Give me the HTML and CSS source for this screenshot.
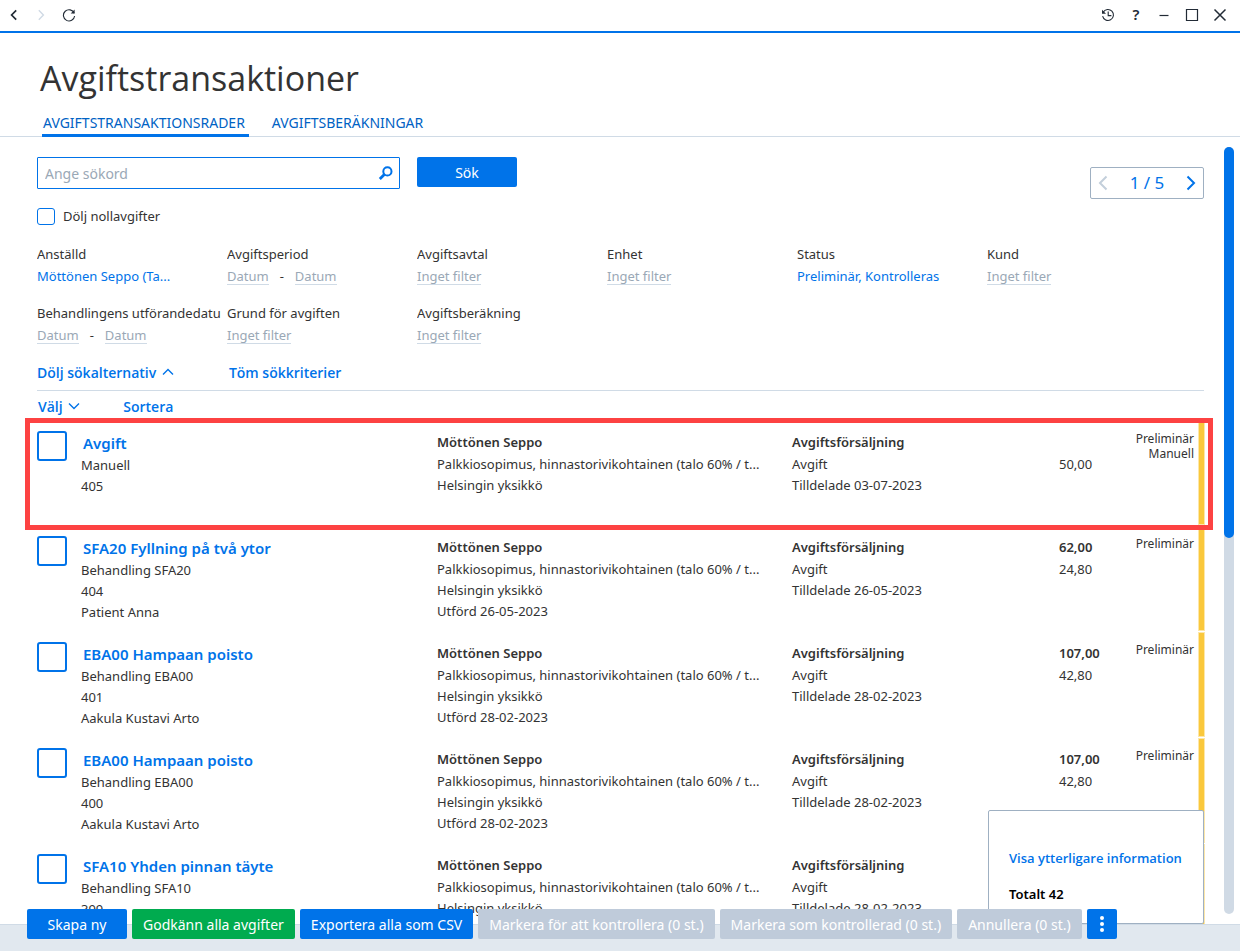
FILE: index.html
```html
<!DOCTYPE html>
<html lang="sv">
<head>
<meta charset="utf-8">
<meta name="viewport" content="width=device-width, initial-scale=1">
<title>Avgiftstransaktioner</title>
<link rel="stylesheet" href="styles.css">
</head>
<body>
<div class="window">
  <header class="titlebar">
    <div class="titlebar-group">
      <button class="icon-btn" aria-label="Bakåt"><svg width="14" height="14" viewBox="0 0 14 14"><path d="M9.2 2.3 4.6 7l4.6 4.7" stroke-width="1.7"/></svg></button>
      <button class="icon-btn icon-btn-off" aria-label="Framåt" disabled><svg width="14" height="14" viewBox="0 0 14 14"><path d="M4.8 2.3 9.4 7l-4.6 4.7" stroke-width="1.4"/></svg></button>
      <button class="icon-btn" aria-label="Uppdatera"><svg width="14" height="14" viewBox="0 0 14 14"><path d="M12.2 5.2A5.6 5.6 0 1 0 12.6 8" stroke-width="1.1"/><path d="M12.6 1.4v4H8.7z" fill="currentColor" stroke="none"/></svg></button>
    </div>
    <div class="titlebar-group">
      <button class="icon-btn" aria-label="Historik"><svg width="14" height="14" viewBox="0 0 14 14"><path d="M2.2 4.2A5.5 5.5 0 1 1 1.6 8.2M7.2 3.6V7.6h3.2" stroke-width="1.1"/><path d="M1 1.8v4h4z" fill="currentColor" stroke="none"/></svg></button>
      <button class="icon-btn icon-text" aria-label="Hjälp">?</button>
      <button class="icon-btn" aria-label="Minimera"><svg width="14" height="14" viewBox="0 0 14 14"><path d="M2.5 7.5h9" stroke-width="1.2"/></svg></button>
      <button class="icon-btn" aria-label="Maximera"><svg width="14" height="14" viewBox="0 0 14 14"><path d="M1.5 1.5h11v11h-11z" stroke-width="1.2"/></svg></button>
      <button class="icon-btn" aria-label="Stäng"><svg width="14" height="14" viewBox="0 0 14 14"><path d="m1.5 1.5 11 11m0-11-11 11" stroke-width="1.5"/></svg></button>
    </div>
  </header>

  <h1 class="page-title">Avgiftstransaktioner</h1>
  <nav class="tabs">
    <a class="tab tab-active" href="#rader">AVGIFTSTRANSAKTIONSRADER</a>
    <a class="tab" href="#berakningar">AVGIFTSBERÄKNINGAR</a>
  </nav>

  <main class="main">
    <div class="content">
      <div class="search-row">
        <form class="search">
          <div class="search-box">
            <input class="search-input" type="text" placeholder="Ange sökord" aria-label="Ange sökord">
            <svg class="search-icon" width="16" height="16" viewBox="0 0 16 16"><circle cx="9.4" cy="6.4" r="4.1" stroke-width="2"/><path d="M6.3 9.5 1.8 14" stroke-width="2.8"/></svg>
          </div>
          <button class="btn search-btn" type="button">Sök</button>
        </form>
        <div class="pager">
          <button class="pager-btn pager-off" aria-label="Föregående" disabled><svg width="14" height="18" viewBox="0 0 14 18"><path d="M10.5 2.5 4 9l6.5 6.5" stroke-width="2"/></svg></button>
          <span>1 / 5</span>
          <button class="pager-btn" aria-label="Nästa"><svg width="14" height="18" viewBox="0 0 14 18"><path d="M3.5 2.5 10 9l-6.5 6.5" stroke-width="2"/></svg></button>
        </div>
      </div>

      <label class="hide-zero"><input class="check" type="checkbox">Dölj nollavgifter</label>

      <div class="filters">
        <div class="filter"><div class="filter-label">Anställd</div><button class="value">Möttönen Seppo (Ta...</button></div>
        <div class="filter"><div class="filter-label">Avgiftsperiod</div><button class="value empty">Datum</button><span class="dash">-</span><button class="value empty">Datum</button></div>
        <div class="filter"><div class="filter-label">Avgiftsavtal</div><button class="value empty">Inget filter</button></div>
        <div class="filter"><div class="filter-label">Enhet</div><button class="value empty">Inget filter</button></div>
        <div class="filter"><div class="filter-label">Status</div><button class="value">Preliminär, Kontrolleras</button></div>
        <div class="filter"><div class="filter-label">Kund</div><button class="value empty">Inget filter</button></div>
        <div class="filter"><div class="filter-label">Behandlingens utförandedatu</div><button class="value empty">Datum</button><span class="dash">-</span><button class="value empty">Datum</button></div>
        <div class="filter"><div class="filter-label">Grund för avgiften</div><button class="value empty">Inget filter</button></div>
        <div class="filter"><div class="filter-label">Avgiftsberäkning</div><button class="value empty">Inget filter</button></div>
      </div>

      <div class="link-row criteria">
        <button class="link">Dölj sökalternativ <svg width="12" height="8" viewBox="0 0 12 8"><path d="M1 6.5 6 1.5l5 5" stroke-width="1.4"/></svg></button>
        <button class="link">Töm sökkriterier</button>
      </div>
      <div class="link-row list-tools">
        <button class="link">Välj <svg width="12" height="8" viewBox="0 0 12 8"><path d="M1 1.5l5 5 5-5" stroke-width="1.4"/></svg></button>
        <button class="link">Sortera</button>
      </div>

      <div class="rows">
        <article class="row row-marked">
          <input class="check check-large" type="checkbox" aria-label="Välj 405">
          <div><a class="row-title" href="#405">Avgift</a><p>Manuell</p><p>405</p></div>
          <div><h2>Möttönen Seppo</h2><p>Palkkiosopimus, hinnastorivikohtainen (talo 60% / t...</p><p>Helsingin yksikkö</p></div>
          <div><h2>Avgiftsförsäljning</h2><p>Avgift</p><p>Tilldelade 03-07-2023</p></div>
          <div><h2>&nbsp;</h2><p>50,00</p></div>
          <div class="status">Preliminär<br>Manuell</div>
        </article>
        <article class="row">
          <input class="check check-large" type="checkbox" aria-label="Välj 404">
          <div><a class="row-title" href="#404">SFA20 Fyllning på två ytor</a><p>Behandling SFA20</p><p>404</p><p>Patient Anna</p></div>
          <div><h2>Möttönen Seppo</h2><p>Palkkiosopimus, hinnastorivikohtainen (talo 60% / t...</p><p>Helsingin yksikkö</p><p>Utförd 26-05-2023</p></div>
          <div><h2>Avgiftsförsäljning</h2><p>Avgift</p><p>Tilldelade 26-05-2023</p></div>
          <div><h2>62,00</h2><p>24,80</p></div>
          <div class="status">Preliminär</div>
        </article>
        <article class="row">
          <input class="check check-large" type="checkbox" aria-label="Välj 401">
          <div><a class="row-title" href="#401">EBA00 Hampaan poisto</a><p>Behandling EBA00</p><p>401</p><p>Aakula Kustavi Arto</p></div>
          <div><h2>Möttönen Seppo</h2><p>Palkkiosopimus, hinnastorivikohtainen (talo 60% / t...</p><p>Helsingin yksikkö</p><p>Utförd 28-02-2023</p></div>
          <div><h2>Avgiftsförsäljning</h2><p>Avgift</p><p>Tilldelade 28-02-2023</p></div>
          <div><h2>107,00</h2><p>42,80</p></div>
          <div class="status">Preliminär</div>
        </article>
        <article class="row">
          <input class="check check-large" type="checkbox" aria-label="Välj 400">
          <div><a class="row-title" href="#400">EBA00 Hampaan poisto</a><p>Behandling EBA00</p><p>400</p><p>Aakula Kustavi Arto</p></div>
          <div><h2>Möttönen Seppo</h2><p>Palkkiosopimus, hinnastorivikohtainen (talo 60% / t...</p><p>Helsingin yksikkö</p><p>Utförd 28-02-2023</p></div>
          <div><h2>Avgiftsförsäljning</h2><p>Avgift</p><p>Tilldelade 28-02-2023</p></div>
          <div><h2>107,00</h2><p>42,80</p></div>
          <div class="status">Preliminär</div>
        </article>
        <article class="row">
          <input class="check check-large" type="checkbox" aria-label="Välj 399">
          <div><a class="row-title" href="#399">SFA10 Yhden pinnan täyte</a><p>Behandling SFA10</p><p>399</p></div>
          <div><h2>Möttönen Seppo</h2><p>Palkkiosopimus, hinnastorivikohtainen (talo 60% / t...</p><p>Helsingin yksikkö</p></div>
          <div><h2>Avgiftsförsäljning</h2><p>Avgift</p><p>Tilldelade 28-02-2023</p></div>
          <div></div>
          <div class="status"></div>
        </article>
      </div>
    </div>
    <div class="scrollbar"><div class="scroll-thumb"></div></div>
    <aside class="summary">
      <button class="link">Visa ytterligare information</button>
      <strong>Totalt 42</strong>
    </aside>
  </main>

  <footer class="footer">
    <div class="actions">
      <button class="btn btn-wide">Skapa ny</button>
      <button class="btn btn-green">Godkänn alla avgifter</button>
      <button class="btn">Exportera alla som CSV</button>
      <button class="btn" disabled>Markera för att kontrollera (0 st.)</button>
      <button class="btn" disabled>Markera som kontrollerad (0 st.)</button>
      <button class="btn" disabled>Annullera (0 st.)</button>
      <button class="btn btn-more" aria-label="Mer"><svg width="4" height="18" viewBox="0 0 4 18"><circle cx="2" cy="3" r="2"/><circle cx="2" cy="9" r="2"/><circle cx="2" cy="15" r="2"/></svg></button>
    </div>
  </footer>
</div>
</body>
</html>
```
FILE: styles.css
```css
* { box-sizing: border-box; }

body {
  margin: 0;
  background: #fff;
  color: #333;
  font: 13px/21px "Noto Sans", "Open Sans", sans-serif;
}

button, input { font: inherit; color: inherit; margin: 0; }
button { padding: 0; border: 0; background: none; white-space: nowrap; cursor: pointer; }
svg { fill: none; stroke: currentColor; display: block; }
h1, h2, p { margin: 0; }
a { text-decoration: none; }

.window { display: flex; flex-direction: column; height: 100vh; overflow: hidden; }

.titlebar {
  flex: none;
  display: flex;
  justify-content: space-between;
  padding: 0 6px 1px;
  border-bottom: 2px solid #0073e9;
}
.titlebar-group { display: flex; }
.icon-btn { display: grid; place-items: center; width: 28px; height: 30px; color: #222b36; }
.titlebar-group:first-child .icon-btn:first-child { width: 15px; }
.titlebar-group:first-child .icon-btn:nth-child(2) { width: 40px; }
.titlebar-group:first-child .icon-btn:nth-child(3) { width: 16px; }
.icon-btn-off { color: #d0dae5; }
.icon-text { font-size: 15px; line-height: 28px; align-content: start; font-weight: 600; }

.page-title { flex: none; padding: 20px 40px 0; font-family: "Open Sans", sans-serif; font-size: 34px; line-height: 51px; font-weight: 400; }

.tabs {
  flex: none;
  display: flex;
  gap: 22px;
  padding: 8px 42px 0;
  border-bottom: 1px solid #d0dbe6;
}
.tab { padding: 0 4px 0 1px; color: #0062c4; font-size: 14px; line-height: 22px; border-bottom: 3px solid transparent; margin-bottom: -1px; }
.tab-active { border-color: #0073e9; }

.main { flex: 1; min-height: 0; position: relative; display: flex; }
.content { flex: 1; min-width: 0; overflow: hidden; padding: 20px 20px 0 25px; }
.content > * { margin-left: 12px; }

.search-row { display: flex; justify-content: space-between; align-items: flex-start; }
.search { display: flex; gap: 17px; }
.search-box { position: relative; }
.search-input {
  display: block;
  width: 363px;
  height: 32px;
  padding: 0 32px 0 7px;
  border: 1px solid #0073e9;
  border-radius: 1px;
  background: #fff;
  font-size: 14px;
}
.search-input::placeholder { color: #9aa8b6; opacity: 1; }
.search-icon { position: absolute; right: 6px; top: 8px; color: #0073e9; }

.btn {
  height: 30px;
  padding: 0 11px;
  border-radius: 2px;
  background: #0073e9;
  color: #fff;
  font-size: 14px;
}
.btn:disabled { background: #bfcbda; }
.btn-green { background: #00ab4f; }
.btn-wide, .search-btn { width: 100px; }
.btn-more { display: grid; place-items: center; width: 30px; padding: 0; }
.btn-more svg { fill: #fff; stroke: none; }

.pager {
  display: flex;
  align-items: center;
  justify-content: space-between;
  width: 114px;
  height: 32px;
  margin-top: 10px;
  padding: 0 5px 1px;
  border: 1px solid #9fb0c2;
  border-radius: 2px;
  color: #0073e9;
  font-size: 17px;
}
.pager-off { color: #c3cfdb; }

.check {
  appearance: none;
  flex: none;
  width: 18px;
  height: 17px;
  border: 1px solid #0073e9;
  border-radius: 3px;
  background: #fff;
}
.check:checked { background: #0073e9; }
.check-large { width: 30px; height: 30px; margin-top: 11px; border-width: 2px; }

.hide-zero { display: flex; align-items: center; gap: 8px; width: fit-content; margin-top: 7px; }

.filters {
  display: grid;
  grid-template-columns: repeat(auto-fill, 190px);
  row-gap: 16px;
  margin-top: 16px;
}
.filter { white-space: nowrap; line-height: 20px; }
.filter-label { height: 23px; width: 184px; overflow: hidden; line-height: 22px; }
.value { height: 20px; line-height: 20px; color: #0073e9; vertical-align: top; }
.empty { height: 19px; color: #9aa8b6; box-shadow: inset 0 -1px #d0dbe6; }
.dash { margin: 0 11px; }

.link { color: #0073e9; font-family: "Open Sans", sans-serif; font-size: 14px; font-weight: 600; }
.link svg { display: inline-block; margin-left: 2px; vertical-align: 2px; }
.link-row { display: flex; }
.criteria { gap: 55px; margin-top: 17px; padding-bottom: 7px; border-bottom: 1px solid #d0dbe6; }
.list-tools { gap: 43px; padding: 5px 1px 3px; }

.row {
  position: relative;
  display: grid;
  grid-template-columns: 44px 356fr 355fr 267fr 60px 80fr;
  min-height: 106px;
  padding-right: 5px;
  white-space: nowrap;
}
.row::before {
  content: "";
  position: absolute;
  inset: 1px -1px 0 auto;
  width: 5px;
  border: 1px solid #fde7a8;
  background: #fac83c;
}
.row > div { padding-top: 10px; min-width: 0; }
.row h2 { font-size: 13px; font-weight: 600; line-height: 24px; }
.row-title { display: block; padding: 1px 0 0 2px; color: #0073e9; font-size: 15px; font-weight: 600; line-height: 24px; }
.row .status { padding: 11px 5px 0 0; text-align: right; font-size: 12px; line-height: 15px; }
.row-marked { min-height: 105px; }
.row-marked::after { content: ""; position: absolute; inset: -2px -9px -5px -12px; border: 5px solid #fd4242; z-index: 1; pointer-events: none; }

.scrollbar { flex: none; width: 10px; margin: 10px 6px 10px 0; border-radius: 5px; background: #d0dae5; }
.scroll-thumb { height: 51%; border-radius: 5px; background: #0073e9; }

.summary {
  position: absolute;
  right: 36px;
  bottom: 0;
  display: flex;
  flex-direction: column;
  align-items: flex-start;
  gap: 15px;
  width: 216px;
  height: 114px;
  padding: 37px 20px 0;
  border: 1px solid #9fb0c2;
  border-radius: 2px;
  background: #fff;
  color: #000;
}
.summary .link { font-size: 13px; }
.summary strong { font-weight: 600; }

.footer { flex: none; position: relative; z-index: 2; padding: 0 27px 12px; border-top: 1px solid #d0dbe6; background: #e1e8ef; }
.actions { display: flex; gap: 5px; margin-top: -16px; }
```
